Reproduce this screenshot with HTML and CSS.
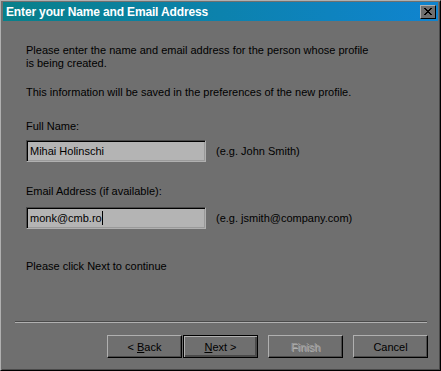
FILE: index.html
```html
<!DOCTYPE html>
<html lang="en">
<head>
  <meta charset="UTF-8" />
  <title>Enter your Name and Email Address</title>
  <link rel="stylesheet" href="styles.css">
</head>
<body>
  <div class="window">
    <div class="titlebar">
      <span class="title">Enter your Name and Email Address</span>
      <button class="close-btn" aria-label="Close">
        <svg width="8" height="7" viewBox="0 0 8 7"><path d="M0 0h2v1h1v1h2v-1h1v-1h2v1h-1v1h-1v1h-1v1h1v1h1v1h1v1h-2v-1h-1v-1h-2v1h-1v1h-2v-1h1v-1h1v-1h1v-1h-1v-1h-1v-1h-1z" fill="#000"/></svg>
      </button>
    </div>

    <div class="content">
      <p class="intro">Please enter the name and email address for the person whose profile<br>is being created.</p>
      <p class="intro second">This information will be saved in the preferences of the new profile.</p>

      <div class="field">
        <label>Full Name:</label>
        <div class="field-row">
          <div class="textbox">Mihai Holinschi</div>
          <span class="hint">(e.g. John Smith)</span>
        </div>
      </div>

      <div class="field">
        <label>Email Address (if available):</label>
        <div class="field-row">
          <div class="textbox">monk@cmb.ro<span class="caret"></span></div>
          <span class="hint">(e.g. jsmith@company.com)</span>
        </div>
      </div>

      <p class="continue">Please click Next to continue</p>
    </div>

    <div class="separator"></div>

    <div class="buttons">
      <div class="pair">
        <button class="btn">&lt; <u>B</u>ack</button>
        <button class="btn default"><u>N</u>ext &gt;</button>
      </div>
      <button class="btn disabled">Finish</button>
      <button class="btn">Cancel</button>
    </div>
  </div>
</body>
</html>
```

FILE: styles.css
```css
:root {
  --face: #6f6f6f;
  --light: #b0b0b0;
  --shade: #4a4a4a;
  --field: #b4b4b4;
}

body {
  margin: 0;
  font-family: 'Liberation Sans', Arial, sans-serif;
  font-size: 11px;
  color: #000;
  background: var(--face);
}
.window {
  width: 441px;
  height: 371px;
  box-sizing: border-box;
  background: var(--face);
  border: 1px solid;
  border-color: var(--light) #000 #000 var(--light);
  box-shadow: inset 1px 1px 0 var(--face), inset -1px -1px 0 var(--shade);
  padding: 1px 2px;
  display: flex;
  flex-direction: column;
}
.titlebar {
  height: 19px;
  background: linear-gradient(to right, #08808a, #1084d0);
  display: flex;
  align-items: center;
  justify-content: space-between;
  padding: 0 2px 0 3px;
}
.title {
  color: #fff;
  font-weight: bold;
  font-size: 12px;
  letter-spacing: -0.15px;
}
.close-btn {
  width: 16px;
  height: 14px;
  padding: 0;
  background: var(--face);
  border: 1px solid;
  border-color: var(--light) #000 #000 var(--light);
  display: flex;
  align-items: center;
  justify-content: center;
}
.content {
  padding: 23px 0 0 23px;
}
p {
  margin: 0;
  line-height: 13px;
}
.second {
  margin-top: 16px;
}
.field {
  margin-top: 21px;
}
.field label {
  display: block;
  line-height: 13px;
  margin-bottom: 7px;
}
.field + .field {
  margin-top: 23px;
}
.field + .field label {
  margin-bottom: 9px;
}
.field-row {
  display: flex;
  align-items: center;
}
.textbox {
  width: 180px;
  height: 22px;
  box-sizing: border-box;
  background: var(--field);
  border: 1px solid;
  border-color: var(--shade) var(--light) var(--light) var(--shade);
  box-shadow: inset 1px 1px 0 #000, inset -1px -1px 0 #9a9a9a;
  padding: 3px 0 0 3px;
  display: flex;
  align-items: flex-start;
  line-height: 14px;
}
.caret {
  display: inline-block;
  width: 1px;
  height: 14px;
  background: #000;
}
.hint {
  margin-left: 10px;
}
.continue {
  margin-top: 31px;
}
.separator {
  margin: auto 11px 0 12px;
  height: 0;
  border-top: 1px solid var(--shade);
  border-bottom: 1px solid var(--light);
}
.buttons {
  display: flex;
  justify-content: flex-end;
  gap: 10px;
  padding: 12px 10px 11px 0;
}
.pair {
  display: flex;
  gap: 1px;
}
.btn {
  width: 75px;
  height: 23px;
  box-sizing: border-box;
  font-family: 'Liberation Sans', Arial, sans-serif;
  font-size: 11px;
  color: #000;
  background: var(--face);
  border: 1px solid;
  border-color: var(--light) #000 #000 var(--light);
  box-shadow: inset -1px -1px 0 var(--shade);
  padding: 0;
}
.btn.default {
  border: 1px solid #000;
  box-shadow: inset 1px 1px 0 var(--light), inset -2px -2px 0 var(--shade);
}
.btn.disabled {
  color: #9a9a9a;
  text-shadow: 1px 1px 0 #b0b0b0;
}
```
